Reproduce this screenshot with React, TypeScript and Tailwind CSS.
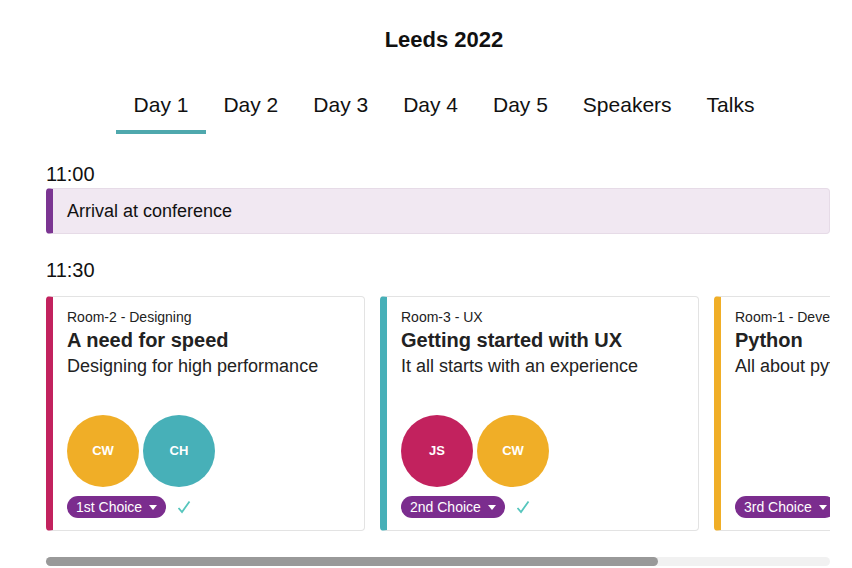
import React from 'react'

const tabs = ['Day 1', 'Day 2', 'Day 3', 'Day 4', 'Day 5', 'Speakers', 'Talks']

type Talk = {
  room: string
  title: string
  desc: string
  bar: string
  speakers: { initials: string; bg: string }[]
  choice: string
}

const talks: Talk[] = [
  {
    room: 'Room-2 - Designing',
    title: 'A need for speed',
    desc: 'Designing for high performance',
    bar: 'border-l-[#c2225e]',
    speakers: [
      { initials: 'CW', bg: 'bg-[#f0ae27]' },
      { initials: 'CH', bg: 'bg-[#47b0b8]' },
    ],
    choice: '1st Choice',
  },
  {
    room: 'Room-3 - UX',
    title: 'Getting started with UX',
    desc: 'It all starts with an experience',
    bar: 'border-l-[#47b0b8]',
    speakers: [
      { initials: 'JS', bg: 'bg-[#c2225e]' },
      { initials: 'CW', bg: 'bg-[#f0ae27]' },
    ],
    choice: '2nd Choice',
  },
  {
    room: 'Room-1 - Development',
    title: 'Python',
    desc: 'All about python and more',
    bar: 'border-l-[#f0ae27]',
    speakers: [],
    choice: '3rd Choice',
  },
]

const TalkCard = ({ talk }: { talk: Talk }) => {
  return (
    <div
      className={`shrink-0 w-[319px] h-[235px] flex flex-col border border-[#e3e3e3] border-l-[7px] rounded-[4px] bg-white pl-[14px] pr-3 pt-3 pb-3 overflow-hidden whitespace-nowrap ${talk.bar}`}
    >
      <p className="text-[14px] leading-4 text-[#222]">{talk.room}</p>
      <h3 className="text-[20px] leading-6 font-bold text-[#222] mt-[3px]">{talk.title}</h3>
      <p className="text-[18px] leading-[22px] text-[#222] mt-[3px]">{talk.desc}</p>
      <div className="mt-auto flex gap-1">
        {talk.speakers.map((s, i) => (
          <div
            key={i}
            className={`w-[72px] h-[72px] rounded-full flex items-center justify-center text-white text-[13px] font-semibold ${s.bg}`}
          >
            {s.initials}
          </div>
        ))}
      </div>
      <div className="flex items-center gap-[11px] mt-[9px]">
        <span className="h-[22px] inline-flex items-center gap-[7px] rounded-full bg-[#7b2d8e] pl-[9px] pr-[9px] text-[14px] text-white">
          {talk.choice}
          <svg width="8" height="5" viewBox="0 0 8 5">
            <path d="M0 0h8L4 5z" fill="white" />
          </svg>
        </span>
        {talk.speakers.length > 0 && (
          <svg width="14" height="14" viewBox="0 0 14 14">
            <path d="M1.5 8 L5 12 L12.5 1.5" fill="none" stroke="#56c6bd" strokeWidth="1.8" />
          </svg>
        )}
      </div>
    </div>
  )
}

export default function App() {
  return (
    <div className="w-[852px] h-[568px] bg-white overflow-hidden font-['Liberation_Sans',Arial,sans-serif] text-[#111]">
      <div className="pl-[36px] flex flex-col items-center">
        <h1 className="mt-[27px] text-[22px] leading-[26px] font-bold">Leeds 2022</h1>
        <nav className="flex mt-[40px]">
          {tabs.map((t, i) => (
            <div
              key={t}
              className={`px-[17.5px] pb-[13px] text-[21px] leading-6 border-b-4 ${
                i === 0 ? 'border-[#4fa8ad]' : 'border-transparent'
              }`}
            >
              {t}
            </div>
          ))}
        </nav>
      </div>

      <div className="mx-[46px] w-[784px]">
        <p className="mt-[28px] text-[20px] leading-6">11:00</p>
        <div className="mt-[2px] h-[46px] flex items-center rounded-[4px] border border-[#e6dbe7] border-l-[7px] border-l-[#7b3592] bg-[#f1e8f2] pl-[14px] text-[18px]">
          Arrival at conference
        </div>

        <p className="mt-[24px] text-[20px] leading-6">11:30</p>
        <div className="mt-[14px] flex gap-[15px] overflow-hidden">
          {talks.map((t) => (
            <TalkCard key={t.title} talk={t} />
          ))}
        </div>

        <div className="mt-[26px] h-[9px] rounded-full bg-[#f1f1f1] flex">
          <div className="w-[612px] h-full rounded-full bg-[#999]" />
        </div>
      </div>
    </div>
  )
}
